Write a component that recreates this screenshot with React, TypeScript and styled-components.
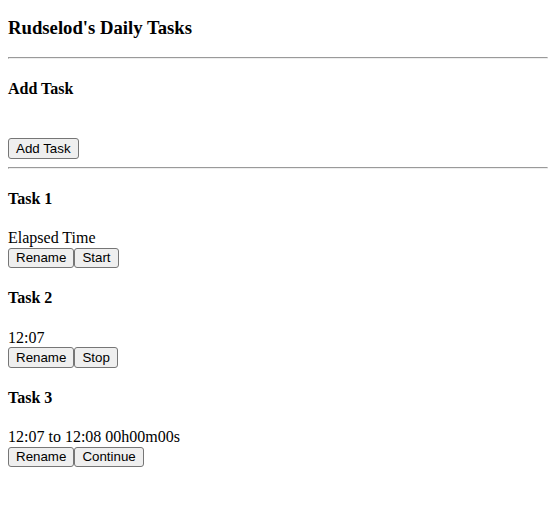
import React from 'react';
import styled, { createGlobalStyle } from 'styled-components';

const GlobalStyle = createGlobalStyle`
  body {
    margin: 0;
    font-family: "Liberation Serif", "Times New Roman", serif;
    font-size: 16px;
    color: #000;
    background: #fff;
  }
`;

const Page = styled.div`
  padding: 0 8px 8px;
  display: flow-root;
`;

const Title = styled.h3`
  font-size: 1.17em;
  margin: 16.5px 0 18.7px;
`;

const Rule = styled.hr`
  margin: 8px 0;
  border-style: solid;
  border-width: 1px;
  border-color: #9a9a9a #eee #eee #9a9a9a;
`;

const Heading = styled.h4`
  font-size: 1em;
  margin: 1.33em 0;
`;

const Line = styled.div`
  min-height: 1.15em;
`;

const Button = styled.button`
  font-family: "Liberation Sans", Arial, sans-serif;
  font-size: 13.333px;
  padding: 1.8px 7px;
  margin: 0;
  color: #000;
  background: #efefef;
  border: 1px solid #767676;
  border-radius: 3px;
`;

interface Task {
  name: string;
  status: string;
  action: string;
}

const tasks: Task[] = [
  { name: 'Task 1', status: 'Elapsed Time', action: 'Start' },
  { name: 'Task 2', status: '12:07', action: 'Stop' },
  { name: 'Task 3', status: '12:07 to 12:08 00h00m00s', action: 'Continue' },
];

const App: React.FC = () => {
  return (
    <Page>
      <GlobalStyle />
      <Title>Rudselod's Daily Tasks</Title>
      <Rule />
      <Heading>Add Task</Heading>
      <Line />
      <Line>
        <Button>Add Task</Button>
      </Line>
      <Rule />
      {tasks.map((task) => (
        <div key={task.name}>
          <Heading>{task.name}</Heading>
          <Line>{task.status}</Line>
          <Line>
            <Button>Rename</Button><Button>{task.action}</Button>
          </Line>
        </div>
      ))}
    </Page>
  );
};

export default App;
